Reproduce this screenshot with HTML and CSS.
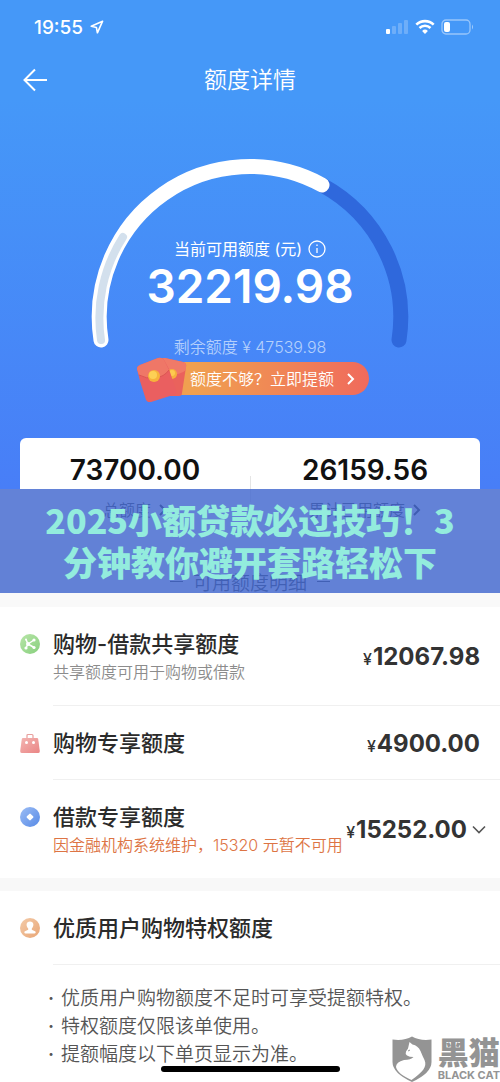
FILE: index.html
```
<!DOCTYPE html>
<html lang="zh-CN">
<head>
<meta charset="utf-8">
<meta name="viewport" content="width=device-width, initial-scale=1">
<title>额度详情</title>
<link rel="stylesheet" href="styles.css">
</head>
<body>
<div class="page">
  <div class="status">
    <div class="status-time">19:55
      <svg width="14" height="14" viewBox="0 0 14 14" fill="none" stroke="#fff" stroke-width="1.6" stroke-linejoin="round"><path d="M12.6 1.2 1.2 6.2l5.2 1.3 1 5.3z"/></svg>
    </div>
    <div class="status-icons">
      <svg width="24" height="16" viewBox="0 0 24 16" fill="#fff"><rect x="1" y="10" width="4" height="5" rx="1"/><g opacity=".22"><rect x="7" y="7" width="4" height="8" rx="1"/><rect x="13" y="4" width="4" height="11" rx="1"/><rect x="19" y="1" width="4" height="14" rx="1"/></g></svg>
      <svg width="20" height="16" viewBox="0 0 20 16" fill="none" stroke="#fff" stroke-width="2.6"><path d="M1.3 5.6a12.6 12.6 0 0 1 17.4 0"/><path d="M4.5 9a8 8 0 0 1 11 0"/><path d="M10 15l-2.9-3a4.2 4.2 0 0 1 5.8 0z" fill="#fff" stroke="none"/></svg>
      <svg width="33" height="16" viewBox="0 0 33 16"><rect x="1" y="1" width="28" height="14" rx="4" fill="none" stroke="#fff" stroke-opacity=".45" stroke-width="1.3"/><rect x="3" y="3" width="6" height="10" rx="2" fill="#fff"/><path d="M31 5.5q2 2.500 0 5z" fill="#fff" fill-opacity=".5"/></svg>
    </div>
  </div>
  <header class="nav">
    <button class="back" type="button" aria-label="返回"><svg width="26" height="24" viewBox="0 0 26 24" fill="none" stroke="#fff" stroke-width="2"><path d="M13 1.500 2.500 12 13 22.500M2.500 12H25"/></svg></button>
    <h1>额度详情</h1>
  </header>
  <section class="gauge">
    <svg class="dial" width="340" height="200" viewBox="0 0 340 200" fill="none" stroke-linecap="round">
      <path d="M242 35A150.500 150.500 0 0 1 319 190" stroke="#2f68dc" stroke-width="15"/>
      <path d="M21 190A150.500 150.500 0 0 1 242 35" stroke="#fff" stroke-width="15"/>
      <path d="M21 190A150.500 150.500 0 0 1 43 87" stroke="#d3e0ed" stroke-width="8"/>
    </svg>
    <div class="readout">
      <p class="caption">当前可用额度 (元)
        <svg width="18" height="18" viewBox="0 0 18 18" fill="none" stroke="#fff" stroke-width="1.300"><circle cx="9" cy="9" r="8"/><path d="M9 8v5M9 4.600v1.500"/></svg>
      </p>
      <p class="total">32219.98</p>
      <p class="remain">剩余额度 ¥ 47539.98</p>
      <a class="promo" href="#raise">
        <svg class="packets" width="54" height="46" viewBox="0 0 54 46">
          <path d="M24 6q2-4 6-4l18 4q4 1 3 5l-4 26q0 3-3 3H28z" fill="#ea625c"/>
          <path d="M24 6q2-4 6-4l18 4q4 1 3 5v3q-7 6-20 5z" fill="#f07a68"/>
          <circle cx="37" cy="18" r="5" fill="#f6b13c"/><circle cx="37" cy="17" r="3" fill="#fdca50"/>
          <path d="M2 13q0-3 3-4l18-7q4-1 6 2l5 9 7 21q1 4-3 5l-22 7q-3 1-5-2L5 25z" fill="#ea5f60"/>
          <path d="M2 13q0-3 3-4l18-7q4-1 6 2l5 10q-5 7-14 8-9 1-16-3z" fill="#ef7767"/>
          <path d="M4 19q7 4 16 3 9-1 14-8" fill="none" stroke="#dc5553"/>
          <circle cx="19" cy="20" r="6" fill="#f7b33b"/><circle cx="18" cy="19" r="4" fill="#fdd055"/>
        </svg>
        <span>额度不够？立即提额</span>
        <svg class="go" width="8" height="12" viewBox="0 0 8 12" fill="none" stroke="#fff" stroke-width="2"><path d="m1 1 5 5-5 5"/></svg>
      </a>
    </div>
  </section>
  <section class="card">
    <a class="stat" href="#total"><strong>73700.00</strong><span>总额度 <svg width="8" height="12" viewBox="0 0 8 12" fill="none" stroke="#333" stroke-width="2"><path d="m1 1 5 5-5 5"/></svg></span></a>
    <a class="stat" href="#used"><strong>26159.56</strong><span>累计已用额度 <svg width="8" height="12" viewBox="0 0 8 12" fill="none" stroke="#333" stroke-width="2"><path d="m1 1 5 5-5 5"/></svg></span></a>
  </section>
  <h2 class="divider">可用额度明细</h2>
  <ul class="list">
    <li class="row">
      <svg class="icon" width="20" height="20" viewBox="0 0 20 20"><defs><linearGradient id="green" x2="1" y2="1"><stop stop-color="#b9e6a9"/><stop offset="1" stop-color="#87cf7d"/></linearGradient></defs><circle cx="10" cy="10" r="10" fill="url(#green)"/><path d="m8 10 6-4M8 10l6 3.500M8 10 6 5.500M8 10l-2 4" stroke="#fff" stroke-width="1.500"/><g fill="#fff"><circle cx="8" cy="10" r="2"/><circle cx="14" cy="6" r="1.600"/><circle cx="14" cy="13.500" r="1.600"/><circle cx="6" cy="5.500" r="1"/><circle cx="6" cy="14" r="1.600"/></g></svg>
      <div class="body"><div class="text"><h3>购物-借款共享额度</h3><p>共享额度可用于购物或借款</p></div><div class="price"><small>¥</small>12067.98</div></div>
    </li>
    <li class="row">
      <svg class="icon" width="20" height="20" viewBox="0 0 20 20"><defs><linearGradient id="pink" x2="1" y2="1"><stop stop-color="#f3b5b2"/><stop offset="1" stop-color="#ea8585"/></linearGradient></defs><path d="M7 6V2.500q0-1 1-1h4q1 0 1 1V6" fill="none" stroke="#e8a09e" stroke-width="1.200"/><path d="M3 5h14q1 0 1.200 1l1.600 12q.2 2-1.500 2H1.700Q0 20 .2 18L1.800 6Q2 5 3 5z" fill="url(#pink)"/><circle cx="6.500" cy="9.500" r="1.500" fill="#fff"/><circle cx="13.500" cy="9.500" r="1.500" fill="#fff"/></svg>
      <div class="body"><div class="text"><h3>购物专享额度</h3></div><div class="price"><small>¥</small>4900.00</div></div>
    </li>
    <li class="row">
      <svg class="icon" width="20" height="20" viewBox="0 0 20 20"><defs><linearGradient id="blue" x2="1" y2="1"><stop stop-color="#9cbdf5"/><stop offset="1" stop-color="#578ae6"/></linearGradient></defs><circle cx="10" cy="10" r="10" fill="url(#blue)"/><rect x="7.300" y="7.300" width="5.400" height="5.400" rx="1" fill="#fff" transform="rotate(45 10 10)"/></svg>
      <div class="body expandable"><div class="text"><h3>借款专享额度</h3><p class="warn">因金融机构系统维护，15320 元暂不可用</p></div><div class="price"><small>¥</small>15252.00</div>
        <button class="expand" type="button" aria-label="展开"><svg width="14" height="9" viewBox="0 0 14 9" fill="none" stroke="#555" stroke-width="1.600"><path d="m1 1.500 6 6 6-6"/></svg></button></div>
    </li>
  </ul>
  <section class="perk">
    <div class="row">
      <svg class="icon" width="20" height="20" viewBox="0 0 20 20"><defs><linearGradient id="tan" x2="1" y2="1"><stop stop-color="#f3cba9"/><stop offset="1" stop-color="#e9a676"/></linearGradient></defs><circle cx="10" cy="10" r="10" fill="url(#tan)"/><path d="M10 3.500c4 0 4.300 4.500 1.800 7v1.200l3.700 1.800q.8 2-1 2h-9q-1.800 0-1-2l3.700-1.800v-1.200C5.700 8 6 3.500 10 3.500z" fill="#fff"/></svg>
      <div class="body"><div class="text"><h3>优质用户购物特权额度</h3></div></div>
    </div>
    <ul class="rules"><li>优质用户购物额度不足时可享受提额特权。</li><li>特权额度仅限该单使用。</li><li>提额幅度以下单页显示为准。</li></ul>
  </section>
  <div class="banner">2025小额贷款必过技巧！3<br>分钟教你避开套路轻松下</div>
  <div class="home-bar"></div>
  <div class="mark">
    <svg width="40" height="46" viewBox="0 0 40 46"><path d="M.5 3.500Q12 5 20 .5q8 4.500 19.500 3V26q0 11-19.500 20Q.5 37 .5 26z" fill="#949494"/><path d="M16 12.500 17.500 6l3 2.500q5.500 1 8 6.500 2 5 4 9c3 7-2 12-13 20C11 40 5 36 4 31q0-5 8-7 7 0 9.500-3-4 0-6.500-1.500-2-2-1-4z" fill="#fff"/><path d="m16 15 2-1" stroke="#949494"/></svg>
    <div class="mark-text"><b>黑猫</b><span>BLACK CAT</span></div>
  </div>
</div>
</body>
</html>
```
FILE: styles.css
```
* { box-sizing: border-box; margin: 0; padding: 0; }
body { background: #fff; color: #2b2b2b; font-family: Inter, "Noto Sans CJK SC", sans-serif; font-size: 16px; }
a { color: inherit; text-decoration: none; }
button { background: none; border: 0; cursor: pointer; }
ul { list-style: none; }
svg { display: block; flex: none; }
.page { position: relative; overflow: hidden; min-height: 100vh; background: linear-gradient(#4598f8, #4598f8 20%, #487ef7) top / 100% 489px no-repeat #fff; }
.status { display: flex; justify-content: space-between; align-items: center; height: 54px; padding: 0 26px 0 34px; color: #fff; }
.status-time { display: flex; align-items: center; gap: 7px; font-size: 19px; font-weight: 500; }
.status-icons { display: flex; align-items: center; gap: 6px; }
.nav { display: grid; grid-template-columns: 30px 1fr 30px; align-items: center; height: 52px; padding: 0 20px; color: #fff; }
.back { padding-left: 2px; }
.nav h1 { text-align: center; font-size: 23px; font-weight: 350; line-height: 34px; }
.gauge { display: grid; justify-items: center; padding-top: 44px; color: #fff; }
.dial, .readout { grid-area: 1 / 1; }
.readout { display: flex; flex-direction: column; align-items: center; padding-top: 87px; }
.caption { display: flex; align-items: center; gap: 6px; line-height: 24px; }
.total { font-size: 46px; font-weight: 600; line-height: 50px; }
.remain { margin-top: 24px; line-height: 24px; font-weight: 350; color: #b4d0fc; }
.promo { display: flex; align-items: center; position: relative; width: 219px; height: 33px; margin-top: 3px; margin-left: 19px; padding: 0 14px 0 40px; border-radius: 17px; background: linear-gradient(90deg, #f0a050 20%, #f06a5c); font-weight: 350; }
.promo span { line-height: 24px; }
.packets { position: absolute; left: -15px; top: -6px; }
.go { margin-left: auto; }
.card { display: grid; grid-template-columns: 1fr 1fr; height: 102px; margin: 43px 20px 0; border-radius: 6px; background: linear-gradient(#e5e5e5, #e5e5e5) center / 1px 26px no-repeat #fff; color: #111; }
.stat { display: flex; flex-direction: column; align-items: center; padding-top: 14px; }
.stat strong { font-size: 28px; font-weight: 600; line-height: 36px; }
.stat span { display: flex; align-items: center; gap: 8px; margin-top: 10px; line-height: 24px; color: #444; font-weight: 350; }
.divider { display: flex; justify-content: center; align-items: center; gap: 10px; height: 67px; padding-top: 16px; background: #f9f9f9; color: #444; font-size: 19px; font-weight: 350; }
.divider::before, .divider::after { content: ""; width: 13px; height: 1px; background: #444; }
.list { border-bottom: 13px solid #f8f8f8; }
.row { display: flex; align-items: flex-start; padding-left: 20px; gap: 13px; }
.icon { margin-top: 27px; }
.body { display: flex; flex: 1; align-items: center; justify-content: space-between; min-width: 0; padding: 21px 20px 20px 0; border-bottom: 1px solid #f0f0f0; }
.list .row:last-child .body { border-bottom: 0; }
.text { flex: none; }
.text h3 { font-size: 22px; font-weight: 500; line-height: 32px; white-space: nowrap; }
.text p { font-size: 16px; font-weight: 350; line-height: 25px; color: #8c8c8c; white-space: nowrap; }
.text .warn { color: #dd7444; }
.price { margin-left: auto; font-size: 24px; font-weight: 700; color: #333; white-space: nowrap; }
.price small { margin-right: 1px; font-size: 16px; font-weight: 500; }
.body.expandable { padding-right: 14px; }
.expandable .text { width: 0; }
.expand { margin-left: 5px; padding: 4px 0; }
.rules { padding: 20px 20px 12px 48px; color: #555; }
.rules li { display: flex; gap: 7px; font-size: 19px; font-weight: 350; line-height: 28px; }
.rules li::before { content: "·"; font-weight: 600; }
.banner { position: absolute; left: 0; right: 0; top: 489px; padding: 10px 0; background: rgba(65, 102, 206, .82); color: #93ecdd; text-align: center; font-family: "Noto Sans CJK SC", sans-serif; font-size: 34px; font-weight: 900; line-height: 42px; }
.home-bar { position: absolute; left: 50%; bottom: 10px; width: 179px; height: 6px; margin-left: -89px; border-radius: 3px; background: #000; }
.mark { position: absolute; right: 0; bottom: 0; display: flex; align-items: flex-end; gap: 6px; color: #949494; }
.mark-text { display: flex; flex-direction: column; }
.mark b { font-size: 31px; font-weight: 900; line-height: 30px; }
.mark span { font-size: 11px; font-weight: 700; line-height: 14px; }
```
